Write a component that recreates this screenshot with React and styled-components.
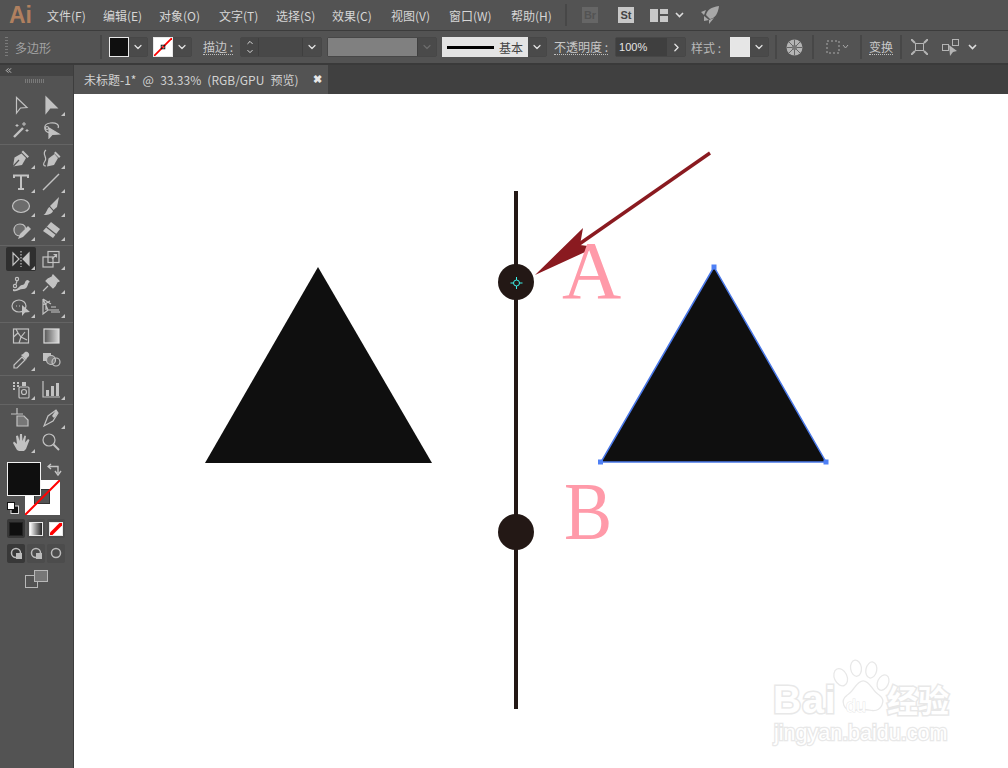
import React from 'react';
import styled, { createGlobalStyle } from 'styled-components';
import { ChevronDown, ChevronUp, ChevronRight, ChevronsLeft } from 'lucide-react';

const Global = createGlobalStyle`
    html, body { margin: 0; padding: 0; background: #535353; }
    body { width: 1008px; height: 768px; overflow: hidden; font-family: "Noto Sans CJK SC", "Liberation Sans", sans-serif; }
    * { box-sizing: border-box; }
`;

const Page = styled.div`
    width: 1008px;
    height: 768px;
    display: flex;
    flex-direction: column;
    background: #535353;
`;

const MenuBar = styled.div`
    height: 31px;
    display: flex;
    align-items: center;
    padding-left: 9px;
    border-bottom: 1px solid #3c3c3c;
    color: #d6d6d6;
    font-size: 12px;
`;

const Logo = styled.div`
    width: 38px;
    color: #b0805f;
    font: bold 23px "Liberation Sans", sans-serif;
    line-height: 30px;
`;

const MenuItem = styled.span`
    width: ${(p) => p.$w}px;
    white-space: nowrap;
`;

const BarSep = styled.div`
    width: 2px;
    height: ${(p) => p.$h || 22}px;
    background: #474747;
    margin-left: ${(p) => p.$ml || 0}px;
`;

const AppBadge = styled.div`
    width: 16px;
    height: 16px;
    margin-left: ${(p) => p.$ml}px;
    background: ${(p) => (p.$on ? '#c8c8c8' : '#666')};
    color: ${(p) => (p.$on ? '#444' : '#535353')};
    font: bold 11px/16px "Liberation Sans", sans-serif;
    text-align: center;
`;

const Svg = styled.svg`
    display: block;
    flex: none;
    margin-left: ${(p) => p.$ml || 0}px;
`;

const OptionsBar = styled.div`
    height: 34px;
    display: flex;
    align-items: center;
    color: #b8b8b8;
    font-size: 12px;
    border-bottom: 2px solid #3a3a3a;
`;

const Grip = styled.div`
    width: 3px;
    height: 20px;
    margin-left: 5px;
    background: repeating-linear-gradient(#7a7a7a 0 1px, transparent 1px 3px);
`;

const ToolName = styled.span`
    width: 92px;
    padding-left: 7px;
    color: #a2a2a2;
`;

const SwatchBox = styled.div`
    display: flex;
    align-items: center;
    height: 20px;
    margin-left: ${(p) => p.$ml}px;
    border: 1px solid #474747;
    border-radius: 2px;
`;

const Swatch = styled.div`
    width: 20px;
    height: 20px;
    margin: -1px 0 -1px -1px;
    border: 1px solid #e8e8e8;
    background: ${(p) => p.$bg};
    flex: none;
`;

const DropBtn = styled.div`
    width: 18px;
    height: 100%;
    display: flex;
    align-items: center;
    justify-content: center;
    color: ${(p) => (p.$off ? '#6c6c6c' : '#e4e4e4')};
    background: #4a4a4a;
`;

const Label = styled.span`
    margin-left: ${(p) => p.$ml}px;
    border-bottom: 1px dotted #c0c0c0;
    line-height: 14px;
    color: #c8c8c8;
    white-space: nowrap;
`;

const PlainLabel = styled.span`
    margin-left: ${(p) => p.$ml}px;
    color: #b8b8b8;
    white-space: nowrap;
`;

const Spinner = styled.div`
    width: 18px;
    height: 100%;
    display: flex;
    flex-direction: column;
    align-items: center;
    justify-content: center;
    color: #dedede;
    background: #474747;
    border-right: 1px solid #3f3f3f;
`;

const Field = styled.div`
    width: ${(p) => p.$w}px;
    height: 100%;
    background: ${(p) => p.$bg || '#484848'};
    border-right: 1px solid #3f3f3f;
    color: #e4e4e4;
    font: 11px/18px "Liberation Sans", sans-serif;
    padding-left: 3px;
`;

const Profile = styled.div`
    width: 86px;
    height: 20px;
    display: flex;
    align-items: center;
    gap: 5px;
    padding-left: 5px;
    margin: -1px 0 -1px -1px;
    background: #e4e4e4;
    color: #444;
    font-size: 12px;
    &::before {
        content: '';
        width: 47px;
        height: 3px;
        background: #000;
    }
`;

const Main = styled.div`
    flex: 1;
    display: flex;
    min-height: 0;
`;

const ToolPanel = styled.div`
    width: 74px;
    flex: none;
    background: #535353;
    border-right: 1px solid #3d3d3d;
    display: flex;
    flex-direction: column;
`;

const PanelHead = styled.div`
    height: 11px;
    background: #444;
    color: #c8c8c8;
    display: flex;
    align-items: center;
    padding-left: 4px;
`;

const PanelGrip = styled.div`
    width: 20px;
    height: 4px;
    margin: 3px auto 0 25px;
    background: repeating-linear-gradient(90deg, #7a7a7a 0 1px, transparent 1px 2px);
`;

const ToolGroup = styled.div`
    display: grid;
    grid-template-columns: 30px 30px;
    grid-auto-rows: 24px;
    padding: 1px 0 3px 6px;
    margin: ${(p) => (p.$first ? '9px' : '0')} 0 0;
    border-bottom: ${(p) => (p.$last ? 'none' : '1px solid #646464')};
`;

const Tool = styled.div`
    position: relative;
    display: flex;
    align-items: center;
    justify-content: center;
    border-radius: 2px;
    background: ${(p) => (p.$active ? '#2f2f2f' : 'transparent')};
    &::after {
        content: '';
        display: ${(p) => (p.$more ? 'block' : 'none')};
        position: absolute;
        right: 1px;
        bottom: 1px;
        border-left: 4px solid transparent;
        border-bottom: 4px solid #c4c4c4;
    }
`;

const ColorStack = styled.div`
    position: relative;
    height: 60px;
    margin: 5px 0 0 7px;
`;

const FillChip = styled.div`
    position: absolute;
    left: 0;
    top: 0;
    width: 34px;
    height: 34px;
    background: #0f0f0f;
    border: 1px solid #f2f2f2;
    z-index: 1;
`;

const StrokeChip = styled.div`
    position: absolute;
    left: 18px;
    top: 18px;
    width: 35px;
    height: 35px;
`;

const ColorSmall = styled.div`
    position: absolute;
    left: ${(p) => p.$x}px;
    top: ${(p) => p.$y}px;
`;

const ChipRow = styled.div`
    display: flex;
    gap: 2px;
    height: 19px;
    margin: ${(p) => p.$mt}px 0 0 7px;
`;

const ChipCell = styled.div`
    width: 18px;
    display: flex;
    align-items: center;
    justify-content: center;
    background: ${(p) => (p.$on ? '#383838' : '#4c4c4c')};
    border-radius: 2px;
`;

const MiniChip = styled.div`
    width: 14px;
    height: 14px;
    border: 1px solid ${(p) => p.$line || '#e8e8e8'};
    background: ${(p) => p.$bg};
`;

const ScreenMode = styled.div`
    display: flex;
    justify-content: center;
    margin-top: 7px;
`;

const Workspace = styled.div`
    flex: 1;
    display: flex;
    flex-direction: column;
    min-width: 0;
`;

const TabStrip = styled.div`
    height: 29px;
    background: #404040;
    display: flex;
    flex: none;
`;

const Tab = styled.div`
    width: 254px;
    display: flex;
    align-items: center;
    justify-content: space-between;
    padding: 0 6px 0 10px;
    background: #535353;
    color: #d2d2d2;
    font-size: 12px;
    word-spacing: 3.5px;
    white-space: nowrap;
`;

const CloseMark = styled.span`
    color: #e8e8e8;
    font: bold 11px "Liberation Sans", sans-serif;
`;

const Canvas = styled.div`
    position: relative;
    flex: 1;
    background: #fff;
    overflow: hidden;
`;

const Letter = styled.span`
    position: absolute;
    left: ${(p) => p.$x}px;
    top: ${(p) => p.$y}px;
    color: #ff9aa9;
    font: 82px/82px "Liberation Serif", serif;
    transform-origin: left center;
    transform: scaleX(${(p) => p.$sx || 1});
`;

const Mark = styled.span`
    position: absolute;
    left: ${(p) => p.$x}px;
    top: ${(p) => p.$y}px;
    color: #fff;
    -webkit-text-stroke: ${(p) => p.$sw || 3}px #e8e8e8;
    paint-order: stroke fill;
    font: ${(p) => p.$f};
    letter-spacing: ${(p) => p.$ls || 0}px;
    white-space: nowrap;
`;

const PawSvg = styled.svg`
    position: absolute;
    left: 755px;
    top: 565px;
`;

const C = '#c2c2c2';

const Ico = ({ s = 20, ml, children }) => (
    <Svg $ml={ml} width={s} height={s} viewBox={`0 0 ${s} ${s}`} fill="none" stroke={C} strokeWidth="1.2">
        {children}
    </Svg>
);

function Gradient() {
    return (
        <>
            <defs>
                <linearGradient id="gr">
                    <stop offset="0" stopColor="#555" />
                    <stop offset="1" stopColor="#ddd" />
                </linearGradient>
            </defs>
            <rect x="3" y="3" width="15" height="14" fill="url(#gr)" stroke="#ddd" />
        </>
    );
}

const tools = [
    [
        { i: <path d="M5.5 2.5 V18 L9.5 13 L16 12.5 Z" /> },
        { more: 1, i: <path d="M5 2 V18 L9 13 L16 13 Z" fill={C} /> },
        { i: <><path d="M3 18 L12 9" strokeWidth="2.4" /><path d="M13 3v4M11 5h4M6 5v3M16 10v3M4.5 6.5h3M14.5 11.5h3" strokeWidth="1" /></> },
        { i: <><path d="M9 14 C2 12 2 5 9 4 C15 3 19 6 17 9" /><path d="M8 9 L8 19 L11 15.5 L18 15 Z" fill={C} /><circle cx="6" cy="9" r="1.5" /></> },
    ],
    [
        { more: 1, i: <><path d="M2 18.5 L3.5 9.5 L10.5 5.5 L15 10 L11 17 Z" fill={C} stroke="none" /><path d="M12 2.5 L18 8.5 L16.5 10 L10.500 4 Z" fill={C} stroke="none" /><path d="M2 18.5 L8 12" stroke="#535353" /></> },
        { more: 1, i: <><path d="M6 18.5 L7.500 10.500 L13.500 6 L17 10 L13 17 Z" fill={C} stroke="none" /><path d="M14.500 3.500 L19.500 8.500 L18 10 L13 5 Z" fill={C} stroke="none" /><path d="M5 2 C0 6 7 9 4 13 C2 16 2 18 5 18" /></> },
        { more: 1, i: <path d="M3 6 V3.5 H17 V6 M10 3.5 V16.5 M7 17 H13" strokeWidth="2" /> },
        { more: 1, i: <path d="M2 18 L18 2" strokeWidth="1.5" /> },
        { more: 1, i: <ellipse cx="10" cy="10" rx="8.5" ry="6.5" fill="#6c6c6c" /> },
        { more: 1, i: <><path d="M9 10 L18 1 L16 11 L12.500 14 Z" fill={C} stroke="none" /><path d="M8.500 11 L12 15 C11 18 6 19.500 2.500 19 C6 17 5.500 13 8.500 11 Z" fill={C} stroke="none" /></> },
        { more: 1, i: <><path d="M9 16 C1 16 1 4 9 4 C14 4 15 8 14 9" fill="#6c6c6c" /><path d="M7 19 L9 14 L17 6 L20 9 L12 17 Z" fill={C} stroke="none" /></> },
        { more: 1, i: <><path d="M10 2 L19 9 L12 18 L2 11 Z" fill={C} stroke="none" /><path d="M5.500 7 L15 14.500" stroke="#535353" /></> },
    ],
    [
        { more: 1, active: 1, i: <><path d="M2 4 L8 10 L2 16 Z" /><path d="M18 4 L12 10 L18 16 Z" fill={C} /><path d="M10 2 V18" strokeDasharray="1.5 1.5" /></> },
        { more: 1, i: <><rect x="2" y="8" width="10" height="10" /><rect x="7" y="2.5" width="11" height="11" /><path d="M11 10 L15.5 5.5 M12.5 5.5 H15.5 V8.5" /></> },
        { more: 1, i: <><path d="M2 16 C7 18 8 12 11 12 C15 12 13 7 17 7 L19 9 C16 9 18 16 12 16 C8 16 7 19 2 18 Z" fill={C} stroke="none" /><circle cx="6" cy="6" r="1.6" /><circle cx="4" cy="13" r="1.6" /><path d="M6 8 L5 11" /></> },
        { more: 1, i: <path d="M12 2 L18 8 L16 9 L14 13 L12 15 L5 8 L7 6 L11 4 Z M7 13 L2 18" fill={C} /> },
        { more: 1, i: <><ellipse cx="8" cy="9" rx="7" ry="6" /><path d="M5 9h1M8 9h1" /><path d="M11 8 V19 L14 15.5 L19 15 Z" fill={C} stroke="none" /></> },
        { more: 1, i: <><path d="M2 2 V17 L7 13 H18 M2 2 L10 7 M2 2 L7 13 M2 8 L9 4 M5 13 L5 6" /><path d="M10 10 H15 M10 13 H18 M10 15 H19" stroke="#8c8c8c" strokeWidth="2" /></> },
    ],
    [
        { i: <><rect x="2.5" y="3" width="15" height="14" /><path d="M2.5 11 L7 7 L10 11 L14 6 M10 11 L8 17 M10 11 L16 14 M7 7 L5 3" /></> },
        { i: <Gradient /> },
        { more: 1, i: <><path d="M3 18 L3 15 L11 7 L14 10 L6 18 Z" /><path d="M10 5 L15 10 L16 8 L18 6 C19 3 16 1 14 2 L12 4 Z" fill={C} stroke="none" /></> },
        { i: <><rect x="2" y="3" width="8" height="8" fill={C} stroke="none" /><circle cx="10" cy="10" r="4.5" fill="#777" /><circle cx="15" cy="12" r="4" /></> },
    ],
    [
        { more: 1, i: <><rect x="8" y="8" width="10" height="11" rx="1" /><rect x="11" y="3" width="4" height="4" fill={C} stroke="none" /><circle cx="13" cy="13" r="2.5" /><path d="M2 4h2M6 4h2M2 7h2M6 7h2M2 10h2" strokeWidth="2" /></> },
        { more: 1, i: <><path d="M2 2 V18 H19" /><rect x="5" y="11" width="3" height="6" fill={C} stroke="none" /><rect x="10" y="7" width="3" height="10" fill={C} stroke="none" /><rect x="15" y="4" width="3" height="13" fill={C} stroke="none" /></> },
    ],
    [
        { i: <><path d="M0 6 H12 M6 0 V6" /><path d="M6 8 H13 L17 12 V18 H6 Z" fill="#777" /></> },
        { more: 1, i: <><path d="M3 18 L7 8 L15 2 L17 5 L12 13 Z" /><path d="M11 8 L15 2 L17 5 L13 10 Z" fill={C} stroke="none" /></> },
        { more: 1, i: <path d="M6 18 L2 11 L3 9.5 L6 12 L5 4 L7 3.5 L8.5 9 L9 2 L11 2 L11.5 9 L13.5 3.5 L15 4 L14 10.5 L17 7 L18.5 8 L15 17 L13 19 H8 Z" fill={C} stroke="none" /> },
        { i: <><circle cx="8" cy="8" r="6" /><path d="M12.5 12.5 L18 18" strokeWidth="2" /></> },
    ],
];

const menu = [
    ['文件(F)', 56], ['编辑(E)', 56], ['对象(O)', 60], ['文字(T)', 57], ['选择(S)', 56],
    ['效果(C)', 59], ['视图(V)', 58], ['窗口(W)', 62], ['帮助(H)', 55],
];

const Drop = ({ off }) => (
    <DropBtn $off={off}><ChevronDown size={12} strokeWidth={2.4} /></DropBtn>
);

const NoStroke = ({ s, bold }) => (
    <svg width={s} height={s} viewBox="0 0 20 20" style={{ display: 'block' }}>
        <path d="M0 20 L20 0" stroke="#f00" strokeWidth={bold ? 6 : 2} />
        {!bold && <rect x="8" y="8" width="4" height="4" fill="none" stroke="#111" />}
    </svg>
);

const App = () => (
    <Page>
        <Global />
        <MenuBar>
            <Logo>Ai</Logo>
            {menu.map(([t, w]) => <MenuItem key={t} $w={w}>{t}</MenuItem>)}
            <BarSep $h={22} $ml={-1} />
            <AppBadge $ml={15}>Br</AppBadge>
            <AppBadge $ml={20} $on>St</AppBadge>
            <Svg $ml={16} width="18" height="13" viewBox="0 0 18 13" fill="#c8c8c8">
                <rect width="8" height="13" />
                <rect x="10" width="8" height="5" />
                <rect x="10" y="7" width="8" height="6" />
            </Svg>
            <Svg $ml={7} width="9" height="6" viewBox="0 0 9 6" fill="none" stroke="#ddd" strokeWidth="1.6">
                <path d="M1 1 L4.5 4.5 L8 1" />
            </Svg>
            <Svg $ml={17} width="18" height="18" viewBox="0 0 18 18" fill="#a8a8a8">
                <path d="M18 0 C10 1 6 4 5 9 L9 13 C14 12 17 8 18 0 Z" />
                <path d="M0 6 L5 4 L3 9 Z M8 18 L8 14 L13 12 Z M3 10 L8 14 L3 15 Z" />
            </Svg>
        </MenuBar>

        <OptionsBar>
            <Grip />
            <ToolName>多边形</ToolName>
            <BarSep $h={24} />
            <SwatchBox $ml={7}><Swatch $bg="#0f0f0f" /><Drop /></SwatchBox>
            <SwatchBox $ml={5}><Swatch $bg="#fff"><NoStroke s={18} /></Swatch><Drop /></SwatchBox>
            <Label $ml={11}>描边 :</Label>
            <SwatchBox $ml={7}>
                <Spinner><ChevronUp size={10} strokeWidth={2.6} /><ChevronDown size={10} strokeWidth={2.6} /></Spinner>
                <Field $w={44} />
                <Drop />
            </SwatchBox>
            <SwatchBox $ml={5}>
                <Field $w={90} $bg="#808080" />
                <Drop off />
            </SwatchBox>
            <SwatchBox $ml={5}><Profile>基本</Profile><Drop /></SwatchBox>
            <Label $ml={7}>不透明度 :</Label>
            <SwatchBox $ml={7}>
                <Field $w={51} $bg="#3f3f3f">100%</Field>
                <DropBtn><ChevronRight size={13} strokeWidth={2.4} /></DropBtn>
            </SwatchBox>
            <PlainLabel $ml={5}>样式 :</PlainLabel>
            <SwatchBox $ml={9}><Swatch $bg="#e6e6e6" /><Drop /></SwatchBox>
            <BarSep $h={24} $ml={6} />
            <Svg $ml={9} width="17" height="17" viewBox="0 0 17 17" fill="#b4b4b4">
                <circle cx="8.5" cy="8.5" r="8" />
                <path d="M8.5 0.5 V16.5 M0.5 8.5 H16.5 M3 3 L14 14 M14 3 L3 14" stroke="#666" />
                <circle cx="8.5" cy="8.5" r="2.5" fill="#777" />
            </Svg>
            <BarSep $h={24} $ml={9} />
            <Svg $ml={11} width="24" height="16" viewBox="0 0 24 16" fill="none" stroke="#aaa">
                <path d="M2 2 H14 V14 H2 Z" strokeDasharray="2 2" />
                <path d="M18 6 L20.5 9 L23 6" />
            </Svg>
            <BarSep $h={24} $ml={11} />
            <Label $ml={7}>变换</Label>
            <BarSep $h={24} $ml={7} />
            <Svg $ml={9} width="17" height="16" viewBox="0 0 17 16" fill="none" stroke="#b4b4b4">
                <rect x="4.5" y="4.5" width="8" height="7" />
                <path d="M0 0 L4 4 M17 0 L13 4 M0 16 L4 12 M17 16 L13 12" strokeWidth="2" />
            </Svg>
            <Svg $ml={14} width="17" height="17" viewBox="0 0 17 17" fill="none" stroke="#b4b4b4">
                <rect x="0.5" y="5.5" width="6" height="6" />
                <rect x="10.5" y="0.5" width="6" height="6" />
                <path d="M7 6 L15 12 L11 13 L8 17 Z" fill="#b4b4b4" stroke="none" />
            </Svg>
            <Svg $ml={9} width="9" height="6" viewBox="0 0 9 6" fill="none" stroke="#ddd" strokeWidth="1.6">
                <path d="M1 1 L4.5 4.5 L8 1" />
            </Svg>
        </OptionsBar>

        <Main>
            <ToolPanel>
                <PanelHead><ChevronsLeft size={9} strokeWidth={2.6} /></PanelHead>
                <PanelGrip />
                {tools.map((group, g) => (
                    <ToolGroup key={g} $first={g === 0} $last={g === tools.length - 1}>
                        {group.map((t, k) => (
                            <Tool key={k} $more={t.more} $active={t.active}><Ico>{t.i}</Ico></Tool>
                        ))}
                    </ToolGroup>
                ))}
                <ColorStack>
                    <StrokeChip>
                        <svg width="35" height="35" viewBox="0 0 35 35" style={{ display: 'block' }}>
                            <path d="M0 0 H35 V35 H0 Z" fill="#fff" />
                            <rect x="9.5" y="9.5" width="15" height="14" fill="#535353" stroke="#333" />
                            <path d="M0 35 L35 0" stroke="#f00" strokeWidth="2" />
                        </svg>
                    </StrokeChip>
                    <FillChip />
                    <ColorSmall $x={40} $y={1}>
                        <svg width="15" height="14" viewBox="0 0 15 14" fill="none" stroke="#c4c4c4" strokeWidth="1.4" style={{ display: 'block' }}>
                            <path d="M4 1 L1 3.5 L4 6 M1 3.5 H11 V10 M8 8 L11 12 L14 8" />
                        </svg>
                    </ColorSmall>
                    <ColorSmall $x={0} $y={40}>
                        <svg width="12" height="12" viewBox="0 0 12 12" style={{ display: 'block' }}>
                            <rect x="4" y="4" width="7.5" height="7.5" fill="#111" stroke="#ddd" />
                            <rect x="0.5" y="0.5" width="7" height="7" fill="#fff" stroke="#111" />
                        </svg>
                    </ColorSmall>
                </ColorStack>
                <ChipRow $mt={-3}>
                    <ChipCell $on><MiniChip $bg="#0f0f0f" $line="#222" /></ChipCell>
                    <ChipCell><MiniChip $bg="linear-gradient(90deg, #fff, #222)" /></ChipCell>
                    <ChipCell>
                        <MiniChip $bg="#fff"><NoStroke s={12} bold /></MiniChip>
                    </ChipCell>
                </ChipRow>
                <ChipRow $mt={6}>
                    {[1, 0, 0].map((on, k) => (
                        <ChipCell key={k} $on={on}>
                            <svg width="13" height="13" viewBox="0 0 13 13" style={{ display: 'block' }}>
                                <circle cx="6" cy="6" r="4.5" fill="none" stroke="#bbb" strokeWidth="1.5" />
                                {k < 2 && <rect x="6" y="6" width="6" height="6" fill="#bbb" />}
                            </svg>
                        </ChipCell>
                    ))}
                </ChipRow>
                <ScreenMode>
                    <svg width="23" height="18" viewBox="0 0 23 18" fill="none" stroke="#b8b8b8" style={{ display: 'block' }}>
                        <rect x="0.5" y="5.5" width="12" height="12" />
                        <rect x="9.5" y="0.5" width="13" height="11" fill="#777" />
                    </svg>
                </ScreenMode>
            </ToolPanel>

            <Workspace>
                <TabStrip>
                    <Tab>
                        未标题-1* @ 33.33% (RGB/GPU 预览)
                        <CloseMark>✖</CloseMark>
                    </Tab>
                </TabStrip>
                <Canvas>
                    <svg width="934" height="674" viewBox="74 94 934 674" style={{ display: 'block' }}>
                        <path d="M318 267 L205 463 H432 Z" fill="#0f0f0f" />
                        <path d="M714 267 L601 462 H826 Z" fill="#0f0f0f" stroke="#4a78e8" strokeWidth="1.5" />
                        <path d="M711.5 264.5h5v5h-5z M598 459.5h5v5h-5z M823.5 459.5h5v5h-5z" fill="#4f80f5" />
                        <rect x="514" y="191" width="4" height="518" fill="#231815" />
                        <circle cx="516" cy="282" r="18" fill="#231815" />
                        <circle cx="516" cy="532" r="18" fill="#231815" />
                        <path d="M710 153 L575 247" stroke="#8a1a20" strokeWidth="3.4" />
                        <path d="M535 275 L583 228 L580 245 L596 247 Z" fill="#8a1a20" />
                        <path d="M516.5 277 V289 M510.5 283 H522.5" stroke="#3df0e8" strokeWidth="1" />
                        <circle cx="516.5" cy="283" r="3" fill="#231815" stroke="#3df0e8" />
                    </svg>
                    <Letter $x={488} $y={136}>A</Letter>
                    <Letter $x={490} $y={377} $sx={0.88}>B</Letter>
                    <PawSvg width="72" height="58" viewBox="0 0 80 64" fill="#fff" stroke="#e8e8e8" strokeWidth="1.4">
                        <ellipse cx="13" cy="20" rx="7" ry="10" transform="rotate(-25 13 20)" />
                        <ellipse cx="30" cy="10" rx="6" ry="9" transform="rotate(-8 30 10)" />
                        <ellipse cx="47" cy="12" rx="6" ry="9" transform="rotate(12 47 12)" />
                        <ellipse cx="60" cy="26" rx="6" ry="9" transform="rotate(25 60 26)" />
                        <path d="M38 24 C46 24 48 36 56 40 C64 46 58 58 48 57 C42 56 34 55 28 57 C16 58 12 46 20 40 C28 36 30 24 38 24 Z" />
                    </PawSvg>
                    <Mark $x={699} $y={584} $f='bold 39px/44px "Liberation Sans", sans-serif' $ls={1}>Bai</Mark>
                    <Mark $x={772} $y={602} $sw={1} $f='18px/20px "Liberation Sans", sans-serif'>du</Mark>
                    <Mark $x={813} $y={585} $f='bold 31px/40px "Noto Sans CJK SC", sans-serif'>经验</Mark>
                    <Mark $x={700} $y={626} $sw={2.5} $f='21.5px/26px "Liberation Sans", sans-serif'>jingyan.baidu.com</Mark>
                </Canvas>
            </Workspace>
        </Main>
    </Page>
);

export default App;
